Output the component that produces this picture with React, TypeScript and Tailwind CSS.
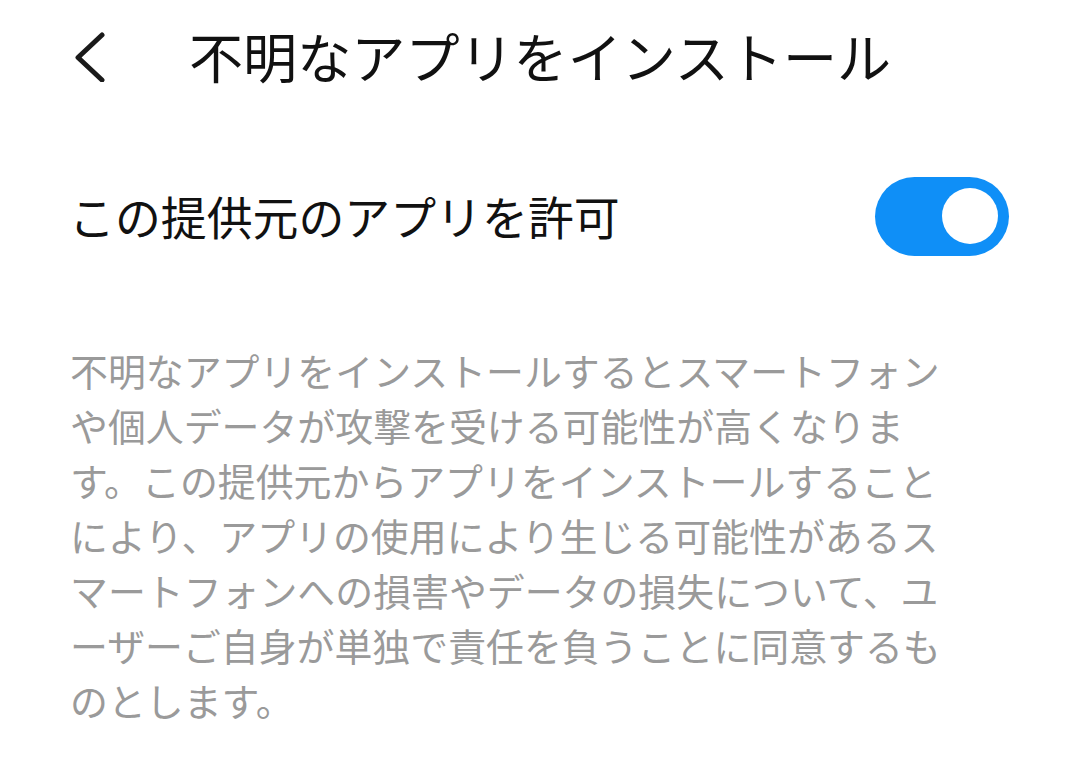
import React from "react";

const lines = [
  "不明なアプリをインストールするとスマートフォン",
  "や個人データが攻撃を受ける可能性が高くなりま",
  "す。この提供元からアプリをインストールすること",
  "により、アプリの使用により生じる可能性があるス",
  "マートフォンへの損害やデータの損失について、ユ",
  "ーザーご自身が単独で責任を負うことに同意するも",
  "のとします。",
];

export default function App() {
  return (
    <div className="w-[1080px] h-[776px] bg-white overflow-hidden font-['Noto_Sans_CJK_JP','Noto_Sans',sans-serif]">
      <div className="h-[112px] flex items-center pl-[73px]">
        <svg width="34" height="52" viewBox="0 0 34 52" className="shrink-0">
          <polyline
            points="29,5 5,27.5 29,50"
            fill="none"
            stroke="#1a1a1a"
            strokeWidth="5"
            strokeLinecap="round"
            strokeLinejoin="round"
          />
        </svg>
        <div className="ml-[82px] text-[54.1px] leading-none text-[#111]">
          不明なアプリをインストール
        </div>
      </div>
      <div className="mt-[64px] h-[80px] flex items-center justify-between pl-[69px] pr-[71px]">
        <div className="text-[45.9px] leading-none text-[#111]">この提供元のアプリを許可</div>
        <div className="w-[134px] h-[79px] rounded-full bg-[#0f8ff7] flex items-center justify-end pr-[11px]">
          <div className="w-[56px] h-[56px] rounded-full bg-white" />
        </div>
      </div>
      <div className="mt-[86px] pl-[70px] text-[37.9px] leading-[55px] text-[#9a9a9a]">
        {lines.map((l, i) => (
          <div key={i} className="whitespace-nowrap">
            {l}
          </div>
        ))}
      </div>
    </div>
  );
}
